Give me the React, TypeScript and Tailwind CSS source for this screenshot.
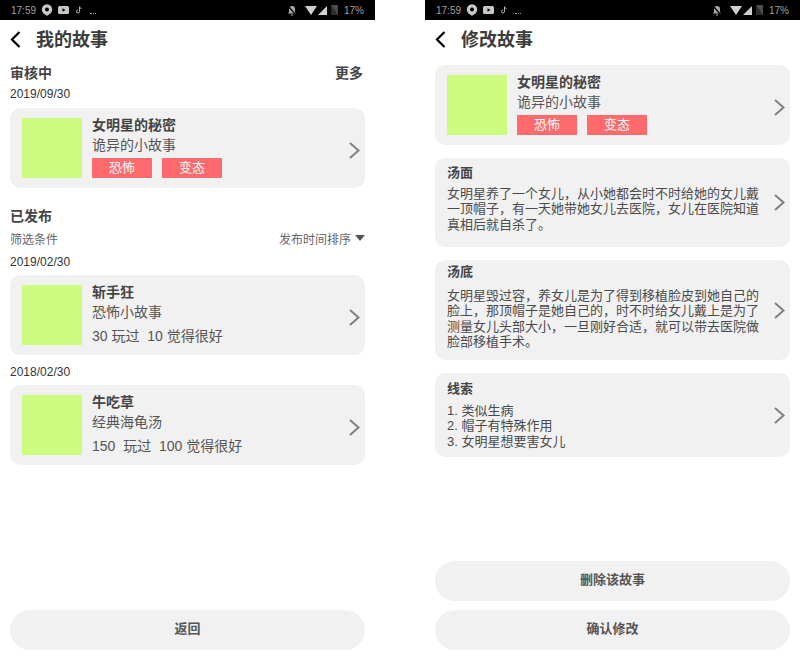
const font = "font-['Liberation_Sans','Noto_Sans_CJK_SC',sans-serif]";

function StatusBar() {
  return (
    <div className="h-5 bg-black flex items-center justify-between pl-[11px] pr-[11px] text-[#9a9a9a] text-[10px] shrink-0">
      <div className="flex items-center">
        <span className="w-[26px] text-[#a0a0a0]">17:59</span>
        <svg width="12" height="12" viewBox="0 0 12 12" className="ml-[4px]">
          <circle cx="6" cy="5.5" r="5.2" fill="#c8c8c8" />
          <circle cx="6" cy="5.5" r="2" fill="#000" />
          <path d="M4 10h4l-2 2z" fill="#c8c8c8" />
        </svg>
        <svg width="11" height="8" viewBox="0 0 11 8" className="ml-[5px]">
          <rect width="11" height="8" rx="1.5" fill="#c8c8c8" />
          <path d="M4.5 2.2v3.6L7.5 4z" fill="#000" />
        </svg>
        <svg width="6" height="8" viewBox="0 0 6 8" className="ml-[7px]">
          <path d="M3.5 0.5v5a1.5 1.5 0 1 1-1.5-1.5M3.5 1q.5 1.5 2 1.5" fill="none" stroke="#b5b5b5" strokeWidth="1" />
        </svg>
        <span className="ml-[8px] w-[6px] h-[1px] border-b border-dotted border-[#9a9a9a] mt-[6px]" />
      </div>
      <div className="flex items-center">
        <svg width="10" height="11" viewBox="0 0 10 11">
          <path d="M5 1a3 3 0 0 1 3 3v3l1 1.5H1L2 7V4a3 3 0 0 1 3-3z" fill="#a8a8a8" />
          <path d="M1 1l8 9" stroke="#000" strokeWidth="1.2" />
          <path d="M4 9.5h2v1H4z" fill="#a8a8a8" />
        </svg>
        <svg width="12" height="9" viewBox="0 0 12 9" className="ml-[8px]">
          <path d="M0 0h12L6 9z" fill="#d0d0d0" />
        </svg>
        <svg width="9" height="9" viewBox="0 0 9 9" className="ml-[1px]">
          <path d="M9 0v9H0z" fill="#d0d0d0" />
        </svg>
        <svg width="7" height="10" viewBox="0 0 7 10" className="ml-[4px]">
          <rect width="7" height="10" fill="#4c4c4c" />
          <path d="M0 0l7 10H0z" fill="#2c2c2c" />
        </svg>
        <span className="ml-[6px] text-[#a0a0a0]">17%</span>
      </div>
    </div>
  );
}

function Header({ title }: { title: string }) {
  return (
    <div className="h-[38px] flex items-center pl-[10px] shrink-0">
      <svg width="11" height="17" viewBox="0 0 11 17" className="mt-[1px]">
        <path d="M9.5 1 L2 8.5 L9.5 16" fill="none" stroke="#000" strokeWidth="2.2" />
      </svg>
      <span className="ml-[15px] mt-[2px] text-lg font-bold text-[#3c3c3c] leading-none">{title}</span>
    </div>
  );
}

function Chevron({ className = "" }: { className?: string }) {
  return (
    <svg width="11" height="17" viewBox="0 0 11 17" className={`shrink-0 ${className}`}>
      <path d="M1 1 L9.5 8.5 L1 16" fill="none" stroke="#808080" strokeWidth="2" />
    </svg>
  );
}

function StoryCard({ title, sub, tags, stats }: { title: string; sub: string; tags?: string[]; stats?: string }) {
  return (
    <div className="h-20 mx-[10px] rounded-[10px] bg-[#f1f1f1] flex items-center pl-3 pr-[5px] shrink-0">
      <div className="w-[60px] h-[60px] bg-[#ccfb7f] shrink-0" />
      <div className="ml-[10px] flex-1 h-[60px] flex flex-col text-sm text-[#555]">
        <div className="font-bold text-[#444] leading-[16px] mt-[-1px]">{title}</div>
        <div className="leading-[16px] mt-[4px]">{sub}</div>
        {tags && (
          <div className="flex gap-[10px] mt-[5px]">
            {tags.map((t) => (
              <span key={t} className="w-[60px] h-5 bg-[#ff6a6c] text-white text-[13px] leading-5 text-center">{t}</span>
            ))}
          </div>
        )}
        {stats && <div className="leading-[16px] mt-[8px] whitespace-pre">{stats}</div>}
      </div>
      <Chevron className="mt-[4px]" />
    </div>
  );
}

function TextCard({ title, lines, className, textClass, titleClass }: { title: string; lines: string[]; className: string; textClass: string; titleClass: string }) {
  return (
    <div className={`mx-[10px] rounded-[10px] bg-[#f1f1f1] flex items-center pl-3 pr-[5px] shrink-0 ${className}`}>
      <div className={`flex-1 text-[13px] text-[#4a4a4a] ${textClass}`}>
        <div className={`font-bold text-[#444] leading-4 ${titleClass}`}>{title}</div>
        {lines.map((l) => (
          <div key={l} className="leading-[15.5px] whitespace-pre">{l}</div>
        ))}
      </div>
      <Chevron />
    </div>
  );
}

function PillButton({ label }: { label: string }) {
  return (
    <div className="h-10 mx-[10px] rounded-[20px] bg-[#f1f1f1] flex items-center justify-center pb-[2px] text-[13px] font-bold text-[#555] shrink-0">
      {label}
    </div>
  );
}

function Phone({ children }: { children: React.ReactNode }) {
  return <div className="w-[375px] h-[667px] bg-white flex flex-col shrink-0">{children}</div>;
}

export default function App() {
  return (
    <div className={`w-[800px] h-[667px] bg-white flex gap-[50px] overflow-hidden ${font}`}>
      <Phone>
        <StatusBar />
        <Header title="我的故事" />
        <div className="flex justify-between px-[10px] mt-[7px] text-sm font-bold text-[#444] leading-4">
          <span>审核中</span>
          <span className="mr-[2px]">更多</span>
        </div>
        <div className="px-[10px] mt-[5px] text-xs text-[#333] leading-[16px]">2019/09/30</div>
        <div className="mt-[6px]">
          <StoryCard title="女明星的秘密" sub="诡异的小故事" tags={["恐怖", "变态"]} />
        </div>
        <div className="px-[10px] mt-5 text-sm font-bold text-[#444] leading-4">已发布</div>
        <div className="flex justify-between items-center px-[10px] mt-[8px] text-xs text-[#666] leading-4">
          <span>筛选条件</span>
          <span className="flex items-center">
            发布时间排序
            <svg width="10" height="6" viewBox="0 0 10 6" className="ml-[4px] mb-[4px]">
              <path d="M0 0h10L5 6z" fill="#555" />
            </svg>
          </span>
        </div>
        <div className="px-[10px] mt-[6px] text-xs text-[#333] leading-[16px]">2019/02/30</div>
        <div className="mt-[5px]">
          <StoryCard title="斩手狂" sub="恐怖小故事" stats="30 玩过  10 觉得很好" />
        </div>
        <div className="px-[10px] mt-[9px] text-xs text-[#333] leading-[16px]">2018/02/30</div>
        <div className="mt-[5px]">
          <StoryCard title="牛吃草" sub="经典海龟汤" stats="150  玩过  100 觉得很好" />
        </div>
        <div className="mt-auto mb-[17px]">
          <PillButton label="返回" />
        </div>
      </Phone>
      <Phone>
        <StatusBar />
        <Header title="修改故事" />
        <div className="mt-[7px]">
          <StoryCard title="女明星的秘密" sub="诡异的小故事" tags={["恐怖", "变态"]} />
        </div>
        <div className="mt-[13px] flex flex-col gap-[13px]">
          <TextCard
            className="h-[89px]"
            textClass="mb-[8px]"
            titleClass="mb-[5px]"
            title="汤面"
            lines={["女明星养了一个女儿，从小她都会时不时给她的女儿戴", "一顶帽子，有一天她带她女儿去医院，女儿在医院知道", "真相后就自杀了。"]}
          />
          <TextCard
            className="h-[100px]"
            textClass="mb-[7px]"
            titleClass="mb-[8px]"
            title="汤底"
            lines={["女明星毁过容，养女儿是为了得到移植脸皮到她自己的", "脸上，那顶帽子是她自己的，时不时给女儿戴上是为了", "测量女儿头部大小，一旦刚好合适，就可以带去医院做", "脸部移植手术。"]}
          />
          <TextCard
            className="h-[84px]"
            textClass="mb-0"
            titleClass="mb-[6px]"
            title="线索"
            lines={["1. 类似生病", "2. 帽子有特殊作用", "3. 女明星想要害女儿"]}
          />
        </div>
        <div className="mt-auto mb-[17px] flex flex-col gap-[9px]">
          <PillButton label="删除该故事" />
          <PillButton label="确认修改" />
        </div>
      </Phone>
    </div>
  );
}
